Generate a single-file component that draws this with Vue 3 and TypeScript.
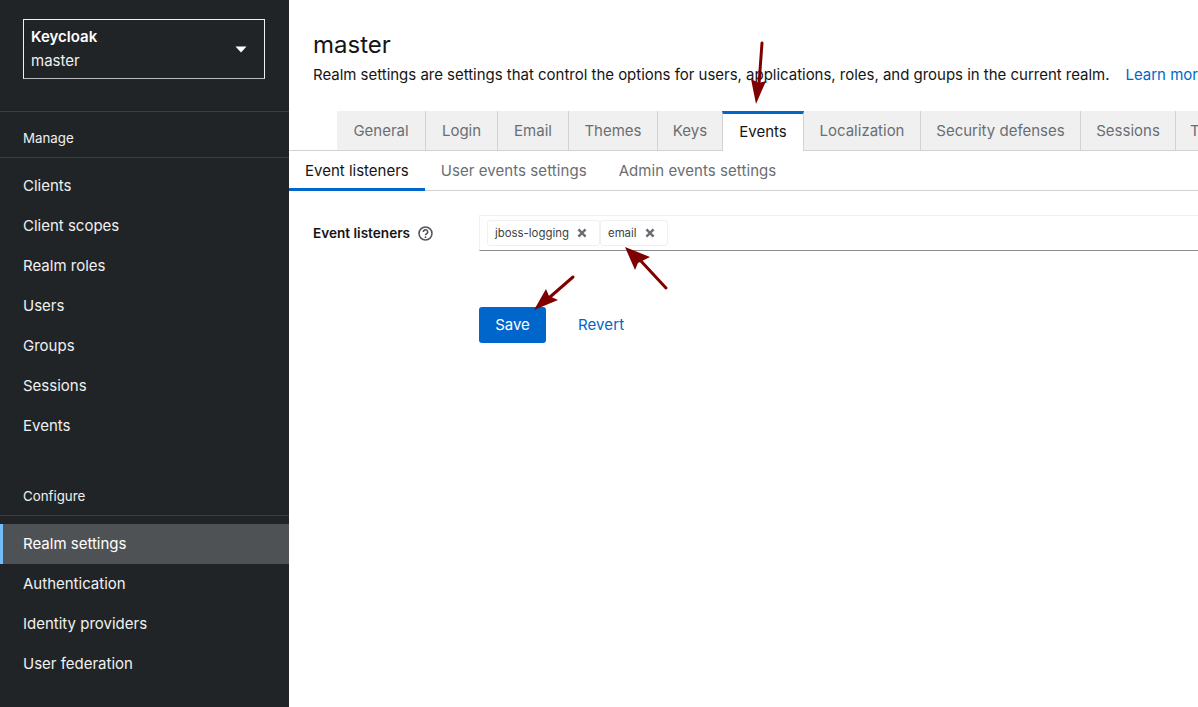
<template>
  <div class="page">
    <aside class="sidebar">
      <div class="brand">
        <button class="realm-select">
          <span class="realm-text">
            <strong>Keycloak</strong>
            <span>master</span>
          </span>
          <svg class="caret" viewBox="0 0 12 7" width="12" height="7"><path d="M0.5 0.5h11L6 6.5z" fill="#fff" /></svg>
        </button>
      </div>
      <section v-for="group in navGroups" :key="group.title" class="nav-group">
        <h2>{{ group.title }}</h2>
        <ul>
          <li v-for="item in group.items" :key="item" :class="{ current: item === 'Realm settings' }">{{ item }}</li>
        </ul>
      </section>
    </aside>

    <main class="content">
      <header class="head">
        <h1>master</h1>
        <p>Realm settings are settings that control the options for users, applications, roles, and groups in the current realm.<a class="learn">Learn more</a></p>
      </header>

      <div class="tabs">
        <span
          v-for="tab in tabs"
          :key="tab.label"
          class="tab"
          :class="{ active: tab.label === 'Events' }"
          :style="{ width: tab.width + 'px' }"
        >{{ tab.label }}</span>
      </div>

      <div class="subtabs">
        <span v-for="(sub, i) in subTabs" :key="sub" class="subtab" :class="{ active: i === 0 }">{{ sub }}</span>
      </div>

      <form class="form" @submit.prevent>
        <label class="field-label">
          Event listeners
          <svg class="help" viewBox="0 0 16 16" width="15" height="15">
            <circle cx="8" cy="8" r="6.9" fill="none" stroke="#54575a" stroke-width="1.7" />
            <path d="M5.6 6.3a2.4 2.2 0 1 1 3.6 1.9c-.9.5-1.2.8-1.2 1.6" fill="none" stroke="#54575a" stroke-width="1.7" />
            <circle cx="8" cy="11.9" r="1" fill="#54575a" />
          </svg>
        </label>
        <div class="controls">
          <div class="chips">
            <span v-for="chip in chips" :key="chip" class="chip">
              {{ chip }}
              <svg viewBox="0 0 10 10" width="10" height="10"><path d="M1.4 1.4l7.2 7.2M8.6 1.4L1.4 8.6" stroke="#6a6e73" stroke-width="2.4" /></svg>
            </span>
          </div>
          <div class="actions">
            <button class="save">Save</button>
            <a class="revert">Revert</a>
          </div>
        </div>
      </form>
    </main>

    <svg class="arrows" viewBox="0 0 1198 707" width="1198" height="707">
      <g v-for="a in arrows" :key="a.id">
        <line :x1="a.x1" :y1="a.y1" :x2="a.x2" :y2="a.y2" stroke="#7f0000" stroke-width="3" stroke-linecap="round" />
        <polygon :points="a.head" fill="#7f0000" />
      </g>
    </svg>
  </div>
</template>

<script setup lang="ts">
interface Arrow {
  id: number;
  x1: number;
  y1: number;
  x2: number;
  y2: number;
  head: string;
}

interface Tab {
  label: string;
  width: number;
}

const navGroups = [
  { title: "Manage", items: ["Clients", "Client scopes", "Realm roles", "Users", "Groups", "Sessions", "Events"] },
  { title: "Configure", items: ["Realm settings", "Authentication", "Identity providers", "User federation"] },
];

const tabs: Tab[] = [
  { label: "General", width: 89 },
  { label: "Login", width: 72 },
  { label: "Email", width: 71 },
  { label: "Themes", width: 89 },
  { label: "Keys", width: 65 },
  { label: "Events", width: 82 },
  { label: "Localization", width: 117 },
  { label: "Security defenses", width: 160 },
  { label: "Sessions", width: 95 },
  { label: "Tokens", width: 80 },
];
const subTabs: string[] = ["Event listeners", "User events settings", "Admin events settings"];
const chips: string[] = ["jboss-logging", "email"];

const arrows: Arrow[] = [
  { id: 1, x1: 762, y1: 43, x2: 759, y2: 84, head: "756,104 751,79 759,83 766,81" },
  { id: 2, x1: 666, y1: 288, x2: 640, y2: 260, head: "625,247 650,257 638,263 635,270" },
  { id: 3, x1: 573, y1: 277, x2: 550, y2: 297, head: "534,310 546,289 549,296 558,300" },
];
</script>

<style>
html,
body {
  margin: 0;
  overflow: hidden;
}
</style>

<style scoped>
.page {
  position: relative;
  display: flex;
  width: 1198px;
  height: 707px;
  overflow: hidden;
  font-family: Inter, "Liberation Sans", sans-serif;
  font-size: 15px;
  color: #151515;
  background: #fff;
}
.sidebar {
  flex: 0 0 289px;
  background: #212427;
  color: #f0f0f0;
}
.brand {
  padding: 19px 24px 32px 23px;
}
.realm-select {
  display: flex;
  align-items: center;
  justify-content: space-between;
  box-sizing: border-box;
  width: 242px;
  height: 60px;
  padding: 0 17px 0 7px;
  background: transparent;
  border: 1px solid #f0f0f0;
  border-bottom-color: #b8bbbe;
  color: #f0f0f0;
  font: inherit;
  text-align: left;
}
.realm-text {
  display: flex;
  flex-direction: column;
  gap: 6px;
  line-height: 18px;
}
.realm-text strong {
  font-weight: 600;
  color: #fff;
}
.nav-group {
  border-top: 1px solid #3c3f42;
}
.nav-group + .nav-group {
  border-top: none;
  margin-top: 24px;
}
.nav-group h2 {
  margin: 0;
  box-sizing: border-box;
  height: 46px;
  padding: 17px 23px 0;
  font-size: 13.3px;
  line-height: 18px;
  font-weight: 400;
  border-bottom: 1px solid #3c3f42;
}
.nav-group ul {
  list-style: none;
  margin: 0;
  padding: 8px 0 0;
}
.nav-group li {
  box-sizing: border-box;
  height: 40px;
  line-height: 40px;
  padding-left: 23px;
}
.nav-group li.current {
  background: #4f5255;
  color: #fff;
  border-left: 3px solid #73bcf7;
  padding-left: 20px;
}
.content {
  flex: 1;
  min-width: 0;
  overflow: hidden;
}
.head {
  padding: 31px 0 0 24px;
  white-space: nowrap;
}
.head h1 {
  margin: 0;
  font-size: 24px;
  line-height: 28px;
  font-weight: 400;
}
.head p {
  margin: 4px 0 0;
  line-height: 24px;
  letter-spacing: -0.02px;
}
.learn {
  margin-left: 16px;
  color: #06c;
}
.tabs {
  display: flex;
  margin-top: 24px;
  padding-left: 48px;
  border-bottom: 1px solid #d2d2d2;
  height: 39px;
  white-space: nowrap;
}
.tab {
  flex: none;
  box-sizing: border-box;
  height: 39px;
  line-height: 39px;
  text-align: center;
  background: #f0f0f0;
  color: #6a6e73;
  border-right: 1px solid #d2d2d2;
}
.tab.active {
  height: 40px;
  margin-left: -1px;
  background: #fff;
  color: #151515;
  border-top: 3px solid #06c;
  border-left: 1px solid #d2d2d2;
  line-height: 35px;
}
.subtabs {
  display: flex;
  height: 39px;
  border-bottom: 1px solid #d2d2d2;
}
.subtab {
  box-sizing: border-box;
  height: 40px;
  padding: 0 16px;
  line-height: 39px;
  color: #6a6e73;
  letter-spacing: 0.07px;
}
.subtab.active {
  color: #151515;
  border-bottom: 3px solid #06c;
  letter-spacing: 0;
}
.form {
  display: flex;
  padding: 24px 0 0 24px;
}
.field-label {
  display: flex;
  flex: 0 0 166px;
  align-items: center;
  align-self: flex-start;
  gap: 8px;
  height: 36px;
  font-size: 13.6px;
  font-weight: 600;
}
.controls {
  flex: 1;
}
.chips {
  display: flex;
  align-items: center;
  box-sizing: border-box;
  height: 36px;
  padding-left: 7px;
  border-top: 1px solid #f0f0f0;
  border-left: 1px solid #f0f0f0;
  border-bottom: 1px solid #8a8d90;
}
.chip {
  display: flex;
  align-items: center;
  justify-content: space-between;
  box-sizing: border-box;
  height: 26px;
  padding: 0 12px 0 7px;
  border: 1px solid #f0f0f0;
  border-radius: 3px;
  font-size: 11.4px;
  color: #3c3f42;
}
.chip:nth-child(1) {
  width: 113px;
}
.chip:nth-child(2) {
  width: 68px;
}
.actions {
  display: flex;
  align-items: center;
  margin-top: 56px;
}
.save {
  box-sizing: border-box;
  width: 67px;
  height: 36px;
  padding-bottom: 2px;
  background: #06c;
  border: none;
  border-radius: 3px;
  color: #fff;
  font: inherit;
}
.revert {
  margin-left: 32px;
  margin-top: -1px;
  color: #06c;
  letter-spacing: 0.1px;
}
.arrows {
  position: absolute;
  top: 0;
  left: 0;
  pointer-events: none;
}
</style>
